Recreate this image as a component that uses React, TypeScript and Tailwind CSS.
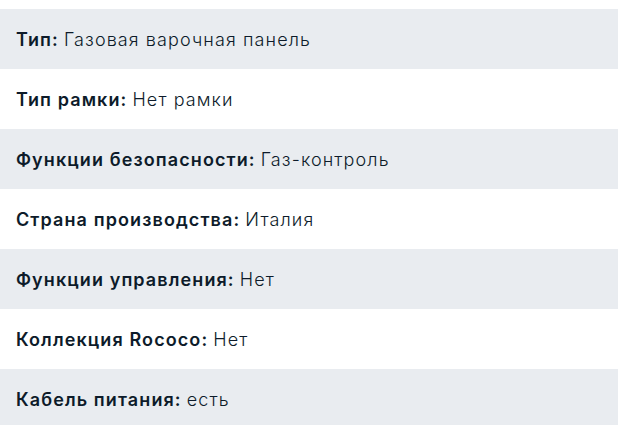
const specs = [
  { label: 'Тип:', value: 'Газовая варочная панель' },
  { label: 'Тип рамки:', value: 'Нет рамки' },
  { label: 'Функции безопасности:', value: 'Газ-контроль' },
  { label: 'Страна производства:', value: 'Италия' },
  { label: 'Функции управления:', value: 'Нет' },
  { label: 'Коллекция Rococo:', value: 'Нет' },
  { label: 'Кабель питания:', value: 'есть' },
];

export default function App() {
  return (
    <div className="bg-white pt-[9px] w-[618px] h-[425px] overflow-hidden font-['Inter',sans-serif] text-[#0d1b2a]">
      {specs.map((s, i) => (
        <div
          key={s.label}
          className={`h-[60px] flex items-center px-4 text-[18px] tracking-[1.1px] ${i % 2 === 0 ? 'bg-[#e9ecf0]' : 'bg-white'}`}
        >
          <span className="font-semibold">{s.label}</span>
          <span className="ml-[5px] font-light">{s.value}</span>
        </div>
      ))}
    </div>
  );
}
